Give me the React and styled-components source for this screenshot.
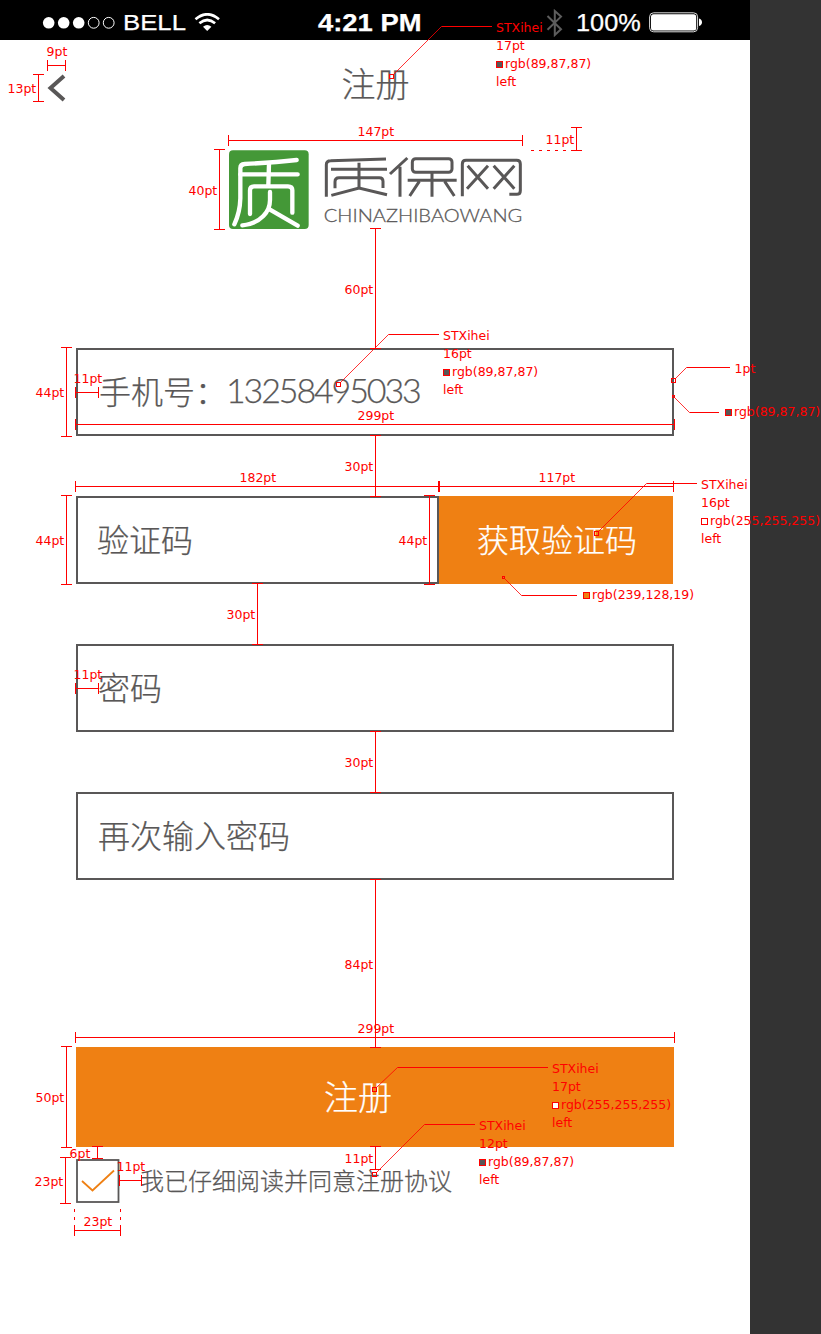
import React from "react";
import styled, { createGlobalStyle } from "styled-components";

const INK = "rgb(89,87,87)";
const ORANGE = "rgb(239,128,19)";
const RED = "#ff0000";

const GlobalStyle = createGlobalStyle`
  * { box-sizing: border-box; }
  body { margin: 0; background: #333; }
`;

const Board = styled.div`
  position: relative;
  width: 821px;
  height: 1334px;
  background: #333333;
  overflow: hidden;
`;

const Screen = styled.main`
  width: 750px;
  height: 1334px;
  background: #fff;
  color: ${INK};
  font-family: "Noto Sans CJK SC", sans-serif;
  font-weight: 300;
  -webkit-text-stroke: 0.25px currentColor;
`;

/* ---------- status bar ---------- */

const StatusBar = styled.div`
  display: flex;
  align-items: center;
  height: 40px;
  padding: 5px 40px 0 42px;
  background: #000;
  color: #fff;
`;

const StatusText = styled.span`
  flex: none;
  width: ${(p) => p.$width}px;
  margin-left: ${(p) => p.$gap}px;
  font: ${(p) => (p.$bold ? 700 : 400)} ${(p) => p.$size || 23}px/30px "Liberation Sans", sans-serif;
  white-space: nowrap;
  transform: scaleX(${(p) => p.$stretch});
  transform-origin: left center;
`;

const StatusIcon = styled.svg`
  flex: none;
  display: block;
  margin-left: ${(p) => p.$gap || 0}px;
`;

/* ---------- header and brand ---------- */

const NavBar = styled.header`
  display: grid;
  grid-template-columns: 1fr auto 1fr;
  align-items: center;
  height: 88px;
  padding: 0 46px 0 47px;
`;

const BackIcon = styled.svg`
  display: block;
  margin-top: 7px;
`;

const NavTitle = styled.h1`
  margin: 0 0 2px;
  font-size: 34px;
  font-weight: 300;
  line-height: 50px;
`;

const Brand = styled.svg`
  display: block;
  margin: 22px 0 0 229px;
  -webkit-text-stroke: 0;
`;

/* ---------- form ---------- */

const Form = styled.form`
  display: flex;
  flex-direction: column;
  gap: 60px;
  width: 598px;
  margin: 118px 0 0 76px;
`;

const FieldRow = styled.div`
  display: flex;
`;

const Field = styled.label`
  display: flex;
  align-items: center;
  width: ${(p) => p.$width || 598}px;
  height: 88px;
  padding: 0 0 4px ${(p) => p.$inset || 20}px;
  border: 2px solid ${INK};
  font-size: 32px;
  line-height: 46px;
`;

const Digits = styled.span`
  margin-left: -1px;
  font-family: Lato, sans-serif;
  font-size: 34px;
  letter-spacing: -2.12px;
`;

const Button = styled.button`
  border: 0;
  background: ${ORANGE};
  color: #fff;
  font-family: inherit;
  font-weight: 300;
  -webkit-text-stroke: inherit;
`;

const CodeButton = styled(Button)`
  width: 234px;
  height: 88px;
  padding: 0 0 4px 2px;
  font-size: 32px;
`;

const SubmitButton = styled(Button)`
  width: 598px;
  height: 100px;
  margin-top: 107px;
  padding: 0 34px 4px 0;
  font-size: 34px;
`;

const Agreement = styled.label`
  display: flex;
  align-items: center;
  gap: 20px;
  margin-top: -48px;
  font-size: 24px;
  line-height: 42px;
`;

const AgreementText = styled.span`
  padding-bottom: 2px;
`;

const Checkbox = styled.svg`
  display: block;
  flex: none;
`;

/* ---------- redline layer ---------- */

const Redlines = styled.div`
  position: absolute;
  inset: 0;
  color: ${RED};
  font: 12.5px/18px "DejaVu Sans", sans-serif;
`;

const LineArt = styled.svg`
  position: absolute;
  inset: 0;
`;

const Tag = styled.div`
  position: absolute;
  left: ${(p) => p.$x}px;
  top: ${(p) => p.$y - 9}px;
  white-space: nowrap;
`;

const ColorLine = styled.div`
  display: flex;
  align-items: center;
  gap: 2px;
`;

const Swatch = styled.i`
  width: 7px;
  height: 7px;
  border: 1px solid ${RED};
  background: ${(p) => p.$color};
`;

// [x1, x2, y]
const horizontals = [
  [47, 65, 65], [228, 522, 140], [75, 98, 392], [75, 674, 424],
  [75, 438, 486], [439, 673, 486], [75, 98, 688], [75, 674, 1037],
  [119, 141, 1180], [74, 120, 1230],
];

// [x, y1, y2]
const verticals = [
  [38, 74, 101], [219, 149, 229], [576, 127, 150], [375, 228, 348],
  [66, 347, 436], [375, 435, 496], [66, 495, 584], [429, 495, 584],
  [257, 583, 644], [375, 731, 792], [375, 879, 1047], [66, 1046, 1147],
  [97, 1146, 1158], [65, 1157, 1203], [375, 1146, 1169],
];

const sizes = [
  ["9pt", 46, 52], ["13pt", 7, 89], ["147pt", 357, 132], ["11pt", 545, 140],
  ["40pt", 188, 191], ["60pt", 344, 290], ["44pt", 35, 393], ["11pt", 73, 379],
  ["299pt", 357, 416], ["30pt", 344, 467], ["182pt", 239, 478], ["117pt", 538, 478],
  ["44pt", 35, 541], ["44pt", 398, 541], ["30pt", 226, 615], ["11pt", 73, 675],
  ["30pt", 344, 763], ["84pt", 344, 965], ["299pt", 357, 1029], ["50pt", 35, 1098],
  ["6pt", 69, 1154], ["11pt", 116, 1167], ["11pt", 344, 1159], ["23pt", 34, 1182],
  ["23pt", 83, 1222], ["1pt", 734, 369],
];

// [marker x, marker y, marker size, elbow x, elbow y, end x]
const leaders = [
  [391, 76, 4, 441, 26, 492], [338, 384, 4, 388, 334, 439],
  [596, 533, 4, 646, 483, 697], [374, 1089, 4, 397, 1067, 548],
  [374, 1174, 4, 424, 1124, 475], [673, 380, 4, 686, 367, 730],
  [673, 396, 2, 689, 412, 719], [503, 577, 2, 521, 595, 577],
];

const fonts = [
  [496, 28, "17pt", "89,87,87"], [443, 336, "16pt", "89,87,87"],
  [701, 485, "16pt", "255,255,255"], [552, 1069, "17pt", "255,255,255"],
  [479, 1126, "12pt", "89,87,87"],
];

function ColorValue({ value }) {
  return (
    <ColorLine>
      <Swatch $color={`rgb(${value})`} />
      <span>rgb({value})</span>
    </ColorLine>
  );
}

function Annotations() {
  return (
    <Redlines>
      <LineArt width="821" height="1334" fill="none" stroke={RED}>
        <g transform="translate(.5 .5)">
          {horizontals.map(([a, b, y]) => (
            <path key={`${a}-${y}`} shapeRendering="crispEdges" d={`M${a} ${y}H${b}M${a} ${y - 5.5}V${y + 5.5}M${b} ${y - 5.5}V${y + 5.5}`} />
          ))}
          {verticals.map(([x, a, b]) => (
            <path key={`${x}-${a}`} shapeRendering="crispEdges" d={`M${x} ${a}V${b}M${x - 5.5} ${a}H${x + 5.5}M${x - 5.5} ${b}H${x + 5.5}`} />
          ))}
          <path d="M530.5 150H567" strokeDasharray="3 5" />
          <path d="M74 1208.5V1220M120 1208.5V1220" strokeDasharray="3 5" />
          {leaders.map(([x, y, s, ex, ey, end]) => {
            const h = s / 2;
            const dy = ey < y ? -h : h;
            return (
              <g key={`${x}-${y}`}>
                <rect x={x - h} y={y - h} width={s} height={s} />
                <path strokeWidth=".8" d={`M${x + h} ${y + dy}L${ex} ${ey}`} />
                <path d={`M${ex} ${ey}H${end - 0.5}`} />
              </g>
            );
          })}
        </g>
      </LineArt>
      {sizes.map(([text, x, y]) => (
        <Tag key={`${x}-${y}`} $x={x + 0.5} $y={y}>{text}</Tag>
      ))}
      {fonts.map(([x, y, size, color]) => (
        <Tag key={`${x}-${y}`} $x={x} $y={y}>
          <div>STXihei</div>
          <div>{size}</div>
          <ColorValue value={color} />
          <div>left</div>
        </Tag>
      ))}
      <Tag $x={725} $y={412}><ColorValue value="89,87,87" /></Tag>
      <Tag $x={583} $y={595}><ColorValue value="239,128,19" /></Tag>
    </Redlines>
  );
}

function Logo() {
  return (
    <Brand width="294" height="80" viewBox="147 105 882 240" fill="none">
      <rect x="147" y="106" width="239" height="236" rx="12" fill="#449837" />
      <g stroke="#fff" strokeWidth="13" strokeLinecap="round" strokeLinejoin="round">
        <path d="M350 135Q280 143 194 147Q181 148 181 160V250Q180 292 163 328" />
        <path d="M181 178H353M267 146L265 212" />
        <path d="M210 297V226Q210 214 222 214H324Q337 214 337 226V293" />
        <path d="M270 231V255Q270 283 250 303Q225 328 187 331M270 284L353 332" />
      </g>
      <g stroke={INK} strokeWidth="9">
        <path d="M439 245V149Q439 137 452 137L618 132M453 163H621M537 143V220" />
        <path d="M465 220V200Q465 188 477 188H598Q609 188 609 199V219M454 241L537 219L621 239" />
        <path d="M682 129L630 177M660 155V245M756 172V245M683 196H830M718 199L689 243M794 199L823 243" />
        <rect x="697" y="131" width="119" height="41" rx="10" />
        <path d="M847 244V147Q847 136 858 136H1010Q1021 136 1021 147V227Q1021 238 1010 238H988" />
        <path d="M863 152L924 221M924 152L861 221M941 152L1003 221M1003 152L941 221" />
      </g>
      <text x="431" y="320" fill={INK} stroke={INK} strokeWidth=".8" fontFamily="Lato, sans-serif" fontWeight="300" fontSize="54" textLength="596" lengthAdjust="spacingAndGlyphs">CHINAZHIBAOWANG</text>
    </Brand>
  );
}

export default function App() {
  return (
    <Board>
      <GlobalStyle />
      <Screen>
        <StatusBar>
          <StatusIcon width="74" height="14" viewBox="0 0 74 14">
            <g fill="#fff">
              <circle cx="6.7" cy="6.8" r="5.8" />
              <circle cx="21.7" cy="6.8" r="5.8" />
              <circle cx="36.7" cy="6.8" r="5.8" />
            </g>
            <g fill="none" stroke="#fff">
              <circle cx="51.7" cy="6.8" r="5.4" />
              <circle cx="66.7" cy="6.8" r="5.4" />
            </g>
          </StatusIcon>
          <StatusText $width={63} $gap={7} $size={22} $stretch={1.17}>BELL</StatusText>
          <StatusIcon $gap={8} width="27" height="19" viewBox="0 0 27 19" fill="none" stroke="#fff">
            <path d="M1.5 6.2Q13.2-3.6 25 6.2" strokeWidth="2.7" />
            <path d="M5.4 10.2Q13.2 3.8 21.1 10.2" strokeWidth="2.7" />
            <path d="M9 13.7Q13.2 10.2 17.4 13.7L13.2 18Z" fill="#fff" stroke="none" />
          </StatusIcon>
          <StatusText $width={104} $gap={97} $bold $stretch={1.19}>4:21 PM</StatusText>
          <StatusIcon $gap={124} width="18" height="28" viewBox="0 0 18 28" fill="none" stroke="#5d5d5d" strokeWidth="2">
            <path d="M1.5 7L15 20.2L8.8 26V2L15 7.6L1.5 20.8" />
          </StatusIcon>
          <StatusText $width={65} $gap={12} $stretch={1.1}>100%</StatusText>
          <StatusIcon $gap={8} width="54" height="21" viewBox="0 0 54 21">
            <rect x=".6" y=".8" width="48" height="19" rx="4" fill="none" stroke="#ddd" />
            <rect x="2" y="2.2" width="45.2" height="16.2" rx="2.5" fill="#fff" />
            <path d="M50 6.5Q53 7.5 53 10.3T50 14Z" fill="#fff" />
          </StatusIcon>
        </StatusBar>

        <NavBar>
          <BackIcon width="19" height="28" viewBox="0 0 19 28" fill="none" stroke={INK} strokeWidth="4">
            <path d="M17 2L3.5 14L17 26" />
          </BackIcon>
          <NavTitle>注册</NavTitle>
        </NavBar>

        <Logo />

        <Form>
          <Field $inset={21}>手机号：<Digits>13258495033</Digits></Field>
          <FieldRow>
            <Field $width={363} $inset={19}>验证码</Field>
            <CodeButton type="button">获取验证码</CodeButton>
          </FieldRow>
          <Field>密码</Field>
          <Field>再次输入密码</Field>
          <SubmitButton type="button">注册</SubmitButton>
          <Agreement>
            <Checkbox width="44" height="44" viewBox="0 0 44 44" fill="none">
              <rect x="1" y="1" width="41.5" height="42" stroke={INK} strokeWidth="1.8" />
              <path d="M6 22L16.5 31.5L38 11.5" stroke={ORANGE} strokeWidth="1.8" />
            </Checkbox>
            <AgreementText>我已仔细阅读并同意注册协议</AgreementText>
          </Agreement>
        </Form>
      </Screen>
      <Annotations />
    </Board>
  );
}
